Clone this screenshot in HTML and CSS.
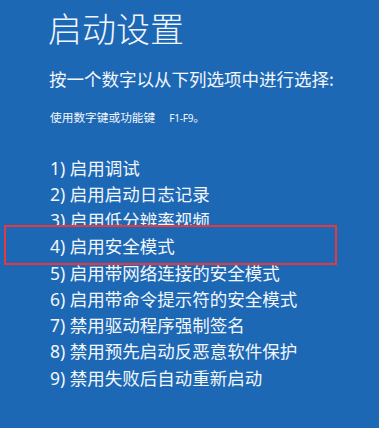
FILE: index.html
```html
<!DOCTYPE html>
<html lang="zh-CN">
<head>
<meta charset="utf-8">
<title>启动设置</title>
<link rel="stylesheet" href="styles.css">
</head>
<body>
<main class="screen">
  <h1 class="title">启动设置</h1>
  <p class="prompt">按一个数字以从下列选项中进行选择:</p>
  <p class="hint">使用数字键或功能键<span class="keys">F1-F9</span>。</p>
  <ol class="options">
    <li>1) 启用调试</li>
    <li>2) 启用启动日志记录</li>
    <li>3) 启用低分辨率视频</li>
    <li class="marked">4) 启用安全模式</li>
    <li>5) 启用带网络连接的安全模式</li>
    <li>6) 启用带命令提示符的安全模式</li>
    <li>7) 禁用驱动程序强制签名</li>
    <li>8) 禁用预先启动反恶意软件保护</li>
    <li>9) 禁用失败后自动重新启动</li>
  </ol>
</main>
</body>
</html>
```

FILE: styles.css
```css
html, body {
  margin: 0;
  padding: 0;
  background: #1c68b5;
}
body {
  width: 379px;
  height: 428px;
  overflow: hidden;
  font-family: "Noto Sans", "Noto Sans CJK SC", sans-serif;
  color: #f3f6fb;
}
.screen {
  padding: 11px 0 0 48px;
}
.title {
  margin: 0;
  font-size: 34px;
  line-height: 34px;
  font-weight: 300;
  font-family: "Noto Sans CJK SC", sans-serif;
}
.prompt {
  margin: 23.5px 0 0 1px;
  font-size: 17.5px;
  line-height: 20px;
  font-family: "Noto Sans CJK SC", sans-serif;
  font-weight: 400;
}
.hint {
  margin: 21.5px 0 0 2px;
  font-size: 11.7px;
  line-height: 14px;
  font-family: "Noto Sans", "Noto Sans CJK SC", sans-serif;
}
.keys {
  margin-left: 14px;
  font-size: 10px;
  line-height: 1;
  letter-spacing: -0.2px;
}
.options {
  list-style: none;
  margin: 30.5px 0 0 2px;
  padding: 0;
  font-size: 17.5px;
  line-height: 26.25px;
}
.options li {
  white-space: nowrap;
}
.marked {
  position: relative;
  z-index: 1;
}
.marked::before {
  content: "";
  position: absolute;
  z-index: -1;
  left: -46px;
  top: -8px;
  width: 329px;
  height: 36px;
  border: 2px solid #e8383c;
  background: #1c68b5;
}
```
